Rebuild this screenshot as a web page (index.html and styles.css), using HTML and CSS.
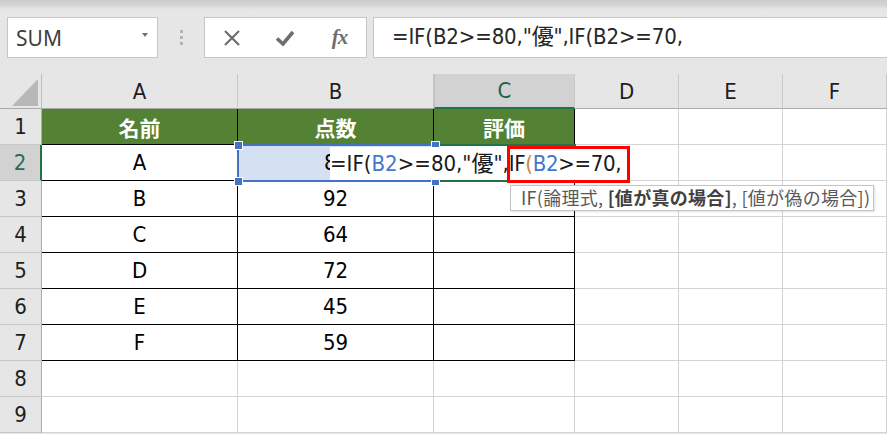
FILE: index.html
```html
<!DOCTYPE html>
<html lang="ja">
<head>
<meta charset="utf-8">
<title>Excel IF</title>
<link rel="stylesheet" href="styles.css">
</head>
<body>
<div class="app">
  <div class="band"></div>
  <div class="toolbar">
    <div class="namebox"><span class="nb-text">SUM</span><span class="caret"></span></div>
    <div class="grip"><i></i><i></i><i></i></div>
    <div class="btns">
      <span class="btn"><svg width="18" height="18" viewBox="0 0 18 18"><path d="M2 2 L16 16 M16 2 L2 16" stroke="#6e6e6e" stroke-width="2.2" fill="none"/></svg></span>
      <span class="btn"><svg width="20" height="18" viewBox="0 0 20 18"><path d="M2 9.5 L8 15 L18 3" stroke="#6e6e6e" stroke-width="3.6" fill="none" stroke-linejoin="miter"/></svg></span>
      <span class="btn fx">fx</span>
    </div>
    <div class="fbar">=IF(B2&gt;=80,"優",IF(B2&gt;=70,</div>
  </div>
  <div class="sheet">
    <div class="corner"><svg width="42" height="35" viewBox="0 0 42 35"><path d="M12 32 L38 32 L38 5 Z" fill="#b8b8b8"/></svg></div>
    <div class="h">A</div><div class="h">B</div><div class="h sel-col">C</div><div class="h">D</div><div class="h">E</div><div class="h">F</div>

    <div class="r">1</div><div class="c t g">名前</div><div class="c t g">点数</div><div class="c t g">評価</div><div class="c"></div><div class="c"></div><div class="c"></div>
    <div class="r sel-row">2</div><div class="c t">A</div><div class="c t ref"><span class="clip">80</span></div><div class="c t"></div><div class="c"></div><div class="c"></div><div class="c"></div>
    <div class="r">3</div><div class="c t">B</div><div class="c t">92</div><div class="c t"></div><div class="c"></div><div class="c"></div><div class="c"></div>
    <div class="r">4</div><div class="c t">C</div><div class="c t">64</div><div class="c t"></div><div class="c"></div><div class="c"></div><div class="c"></div>
    <div class="r">5</div><div class="c t">D</div><div class="c t">72</div><div class="c t"></div><div class="c"></div><div class="c"></div><div class="c"></div>
    <div class="r">6</div><div class="c t">E</div><div class="c t">45</div><div class="c t"></div><div class="c"></div><div class="c"></div><div class="c"></div>
    <div class="r">7</div><div class="c t">F</div><div class="c t">59</div><div class="c t"></div><div class="c"></div><div class="c"></div><div class="c"></div>
    <div class="r">8</div><div class="c"></div><div class="c"></div><div class="c"></div><div class="c"></div><div class="c"></div><div class="c"></div>
    <div class="r">9</div><div class="c"></div><div class="c"></div><div class="c"></div><div class="c"></div><div class="c"></div><div class="c"></div>

    <div class="active"></div>
    <div class="refbox"></div>
    <span class="hd hd-tl"></span><span class="hd hd-tr"></span><span class="hd hd-bl"></span><span class="hd hd-br"></span>
    <div class="editor">=IF(<span class="blue">B2</span>&gt;=80,"優",<span class="tight">IF<span class="par">(</span><span class="blue">B2</span>&gt;=70,</span></div>
    <div class="redbox"></div>
    <div class="tip">IF(論理式, <b>[値が真の場合]</b>, [値が偽の場合])</div>
  </div>
</div>
</body>
</html>
```

FILE: styles.css
```css
* { box-sizing: border-box; }
html, body { margin: 0; padding: 0; }
body {
  width: 887px;
  height: 434px;
  overflow: hidden;
  background: #e6e6e6;
  font-family: "DejaVu Sans Condensed", "DejaVu Sans", "Noto Sans CJK JP", sans-serif;
  font-stretch: semi-condensed;
}
.app { width: 887px; height: 434px; overflow: hidden; }
.band {
  height: 9px;
  background: linear-gradient(#cbcbcb, #d6d6d6 60%, #e4e4e4);
}
.toolbar {
  display: flex;
  height: 41px;
  margin-top: 8px;
  padding-left: 7px;
}
.namebox {
  width: 151px;
  height: 41px;
  background: #fff;
  border: 1px solid #c6c6c6;
  display: flex;
  align-items: center;
  justify-content: space-between;
  padding: 0 9px 0 8px;
}
.nb-text {
  font-family: "Noto Sans", sans-serif;
  font-stretch: normal;
  font-size: 21px;
  color: #404040;
  line-height: 1;
  margin-top: 2px;
}
.caret {
  width: 0; height: 0;
  border-left: 3.5px solid transparent;
  border-right: 3.5px solid transparent;
  border-top: 4px solid #707070;
  margin-top: -6px;
}
.grip {
  width: 46px;
  display: flex;
  flex-direction: column;
  align-items: center;
  justify-content: center;
  gap: 3px;
}
.grip i { display: block; width: 3px; height: 3px; background: #b4b4b4; }
.btns {
  width: 163px;
  height: 41px;
  background: #fff;
  border: 1px solid #c6c6c6;
  display: flex;
  align-items: center;
}
.btn {
  width: 54px;
  display: flex;
  justify-content: center;
  align-items: center;
}
.btn svg { display: block; }
.fx {
  font-family: "Liberation Serif", serif;
  font-style: italic;
  font-weight: bold;
  font-size: 21px;
  color: #6e6e6e;
  letter-spacing: -1px;
  margin-left: 2px;
}
.fbar {
  flex: 1;
  margin-left: 6px;
  margin-right: -3px;
  height: 41px;
  background: #fff;
  border: 1px solid #c6c6c6;
  padding-left: 18px;
  font-size: 22px;
  line-height: 38px;
  color: #262626;
  white-space: nowrap;
  letter-spacing: -0.15px;
}
.sheet {
  position: relative;
  margin-top: 16px;
  display: grid;
  grid-template-columns: 42px 196px 196px 141px 104px 104px 104px;
  grid-template-rows: 35px repeat(9, 36px);
  font-size: 22px;
}
.corner {
  background: #e6e6e6;
  border-right: 1px solid #bdbdbd;
  border-bottom: 1px solid #ababab;
}
.corner svg { display: block; }
.h {
  background: #e6e6e6;
  border-right: 1px solid #c8c8c8;
  border-bottom: 1px solid #ababab;
  display: flex;
  align-items: center;
  justify-content: center;
  color: #1e1e1e;
}
.h.sel-col {
  background: #d2d2d2;
  border-bottom: 2px solid #217346;
  color: #1f5f46;
  border-left: 1px solid #c0c0c0;
}
.r {
  background: #e6e6e6;
  border-right: 1px solid #ababab;
  border-bottom: 1px solid #c8c8c8;
  display: flex;
  align-items: center;
  justify-content: center;
  color: #1e1e1e;
}
.r.sel-row {
  background: #d2d2d2;
  border-right: 2px solid #217346;
  color: #1f6f5a;
}
.c {
  background: #fff;
  border-right: 1px solid #d4d4d4;
  border-bottom: 1px solid #d4d4d4;
  display: flex;
  align-items: center;
  justify-content: center;
  color: #000;
  white-space: nowrap;
  overflow: hidden;
}
.c.t {
  border-right-color: #000;
  border-bottom-color: #000;
}
.c.g {
  background: #548235;
  color: #fff;
  font-family: "Noto Sans CJK JP", sans-serif;
  font-weight: bold;
  font-size: 21px;
}
.c.ref {
  background: #d6e0f3;
  justify-content: flex-start;
  padding-left: 86px;
}
.clip {
  display: block;
  width: 7px;
  overflow: hidden;
  white-space: nowrap;
}

.active {
  position: absolute;
  left: 434px; top: 70px;
  width: 142px; height: 38px;
  border: 2px solid #217346;
}
.refbox {
  position: absolute;
  left: 237px; top: 70px;
  width: 199px; height: 38px;
  border: 2px solid #4472c4;
}
.hd {
  position: absolute;
  width: 7px; height: 7px;
  background: #4472c4;
  outline: 1px solid #fff;
}
.hd-tl { left: 235px; top: 68px; }
.hd-tr { left: 432px; top: 68px; }
.hd-bl { left: 235px; top: 104px; }
.hd-br { left: 432px; top: 104px; }
.editor {
  position: absolute;
  left: 330px; top: 73px;
  width: 300px; height: 33px;
  background: #fff;
  line-height: 33px;
  font-size: 22px;
  color: #1a1a1a;
  white-space: nowrap;
}
.tight { letter-spacing: -0.35px; }
.blue { color: #3f78d0; }
.par { color: #c8864e; }
.redbox {
  position: absolute;
  left: 507px; top: 72px;
  width: 123px; height: 37px;
  border: 3px solid #ff0000;
}
.tip {
  position: absolute;
  left: 510px; top: 111px;
  width: 364px; height: 26px;
  background: #fff;
  border: 1px solid #c4c4c4;
  box-shadow: 1px 1px 2px rgba(0,0,0,0.12);
  padding-left: 10px;
  font-family: "Noto Sans CJK JP", sans-serif;
  font-stretch: normal;
  font-size: 18px;
  letter-spacing: 0.3px;
  line-height: 23px;
  color: #595959;
  white-space: nowrap;
}
.tip b { color: #404040; font-weight: bold; }
```
